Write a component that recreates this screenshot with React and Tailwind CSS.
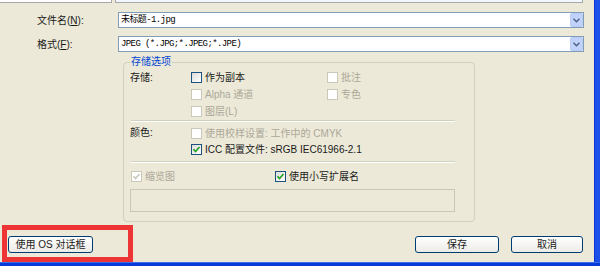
import React from "react";

const cjk = { fontFamily: '"Liberation Sans", "Noto Sans CJK SC", sans-serif' };
const mono = { fontFamily: '"Liberation Mono", "Noto Sans CJK SC", monospace' };

const Check = ({ checked, disabled }) => (
  <span
    className={`inline-flex items-center justify-center w-[11px] h-[11px] border shrink-0 ${
      disabled ? "border-[#CAC8BB] bg-white" : "border-[#1C5180] bg-gradient-to-br from-[#DCDCD7] to-white"
    }`}
  >
    {checked && (
      <svg width="9" height="9" viewBox="0 0 9 9">
        <path
          d="M1.5 4.2 L3.5 6.5 L7.5 2"
          fill="none"
          stroke={disabled ? "#CAC8BB" : "#21A121"}
          strokeWidth="1.6"
        />
      </svg>
    )}
  </span>
);

const Option = ({ label, checked, disabled }) => (
  <div className="flex items-center gap-[3px]">
    <Check checked={checked} disabled={disabled} />
    <span className={disabled ? "text-[#ACA899]" : "text-[#1a1a1a]"}>{label}</span>
  </div>
);

const Combo = ({ value }) => (
  <div className="flex items-center w-[466px] h-[16px] border border-[#7F9DB9] bg-white">
    <span className="flex-1 pl-[2px] text-[9px] tracking-[-0.6px] text-black leading-none" style={mono}>
      {value}
    </span>
    <span className="w-[13px] h-[14px] flex items-center justify-center bg-[#C1D3FB] border border-[#B9CBF3] rounded-[2px]">
      <svg width="7" height="5" viewBox="0 0 7 5">
        <path d="M0.5 0.8 L3.5 3.8 L6.5 0.8" fill="none" stroke="#4D6185" strokeWidth="1.4" />
      </svg>
    </span>
  </div>
);

const XpButton = ({ children, w }) => (
  <button
    className={`${w} h-[17px] border border-[#003C74] rounded-[3px] bg-gradient-to-b from-white to-[#ECEBE6] text-[10px] text-[#1a1a1a] leading-none`}
    style={cjk}
  >
    {children}
  </button>
);

export default function App() {
  return (
    <div className="w-[600px] h-[266px] bg-[#ECE9D8] flex flex-col overflow-hidden text-[10px] text-[#1a1a1a]" style={cjk}>
      <div className="flex flex-1">
        <div className="flex-1 flex flex-col relative">
          {/* partial row at top */}
          <div className="flex h-[3px] gap-[3px]">
            <div className="w-[112px] border-b border-r border-[#A7A6AA] bg-white" />
            <div className="w-[468px] border-b border-l border-r border-[#A7A6AA] bg-[#F3F7FE]" />
          </div>

          <div className="flex items-center mt-[9px]">
            <span className="w-[118px] pl-[37px]">文件名(<u>N</u>):</span>
            <Combo value="未标题-1.jpg" />
          </div>
          <div className="flex items-center mt-[8px]">
            <span className="w-[118px] pl-[37px]">格式(<u>F</u>):</span>
            <Combo value="JPEG (*.JPG;*.JPEG;*.JPE)" />
          </div>

          <fieldset className="ml-[123px] mt-[3px] w-[352px] h-[167px] border border-[#D0D0BF] rounded-[4px] px-[6px]">
            <legend className="px-[1px] text-[#0046D5] leading-[14px]">存储选项</legend>

            <div className="flex">
              <span className="w-[61px] leading-[17px]">存储:</span>
              <div className="flex flex-col w-[136px]">
                <div className="h-[17px] flex items-center"><Option label="作为副本" /></div>
                <div className="h-[17px] flex items-center"><Option label="Alpha 通道" disabled /></div>
                <div className="h-[17px] flex items-center"><Option label="图层(L)" disabled /></div>
              </div>
              <div className="flex flex-col">
                <div className="h-[17px] flex items-center"><Option label="批注" disabled /></div>
                <div className="h-[17px] flex items-center"><Option label="专色" disabled /></div>
              </div>
            </div>

            <div className="ml-[1px] w-[324px] border-t border-[#D0D0BF] border-b border-b-white" />

            <div className="flex pt-[3px]">
              <span className="w-[61px] leading-[16px]">颜色:</span>
              <div className="flex flex-col">
                <div className="h-[16px] flex items-center"><Option label="使用校样设置: 工作中的 CMYK" disabled /></div>
                <div className="h-[16px] flex items-center"><Option label="ICC 配置文件: sRGB IEC61966-2.1" checked /></div>
              </div>
            </div>

            <div className="ml-[1px] mt-[4px] w-[324px] border-t border-[#D0D0BF] border-b border-b-white" />

            <div className="flex mt-[5px] h-[16px] items-center">
              <div className="w-[145px] pl-[1px]"><Option label="缩览图" checked disabled /></div>
              <Option label="使用小写扩展名" checked />
            </div>

            <div className="mt-[5px] w-[325px] h-[23px] border border-[#C9C7BA]" />
          </fieldset>

          <div className="flex items-center mt-[14px] pl-[8px] pr-[11px]">
            <XpButton w="w-[85px]">使用 OS 对话框</XpButton>
            <div className="flex-1" />
            <XpButton w="w-[84px]">保存</XpButton>
            <div className="w-[12px]" />
            <XpButton w="w-[72px]">取消</XpButton>
          </div>

          {/* red annotation box */}
          <div className="absolute left-[2px] top-[225px] w-[131px] h-[37px] border-[5px] border-[#EE3535]" />
        </div>
        <div className="w-[6px] flex">
          <div className="w-[1px] bg-[#0831D9]" />
          <div className="flex-1 bg-[#1C50E8]" />
        </div>
      </div>
      <div className="h-[4px] bg-[#0839D9] border-t border-[#3A6EE8]" />
    </div>
  );
}
